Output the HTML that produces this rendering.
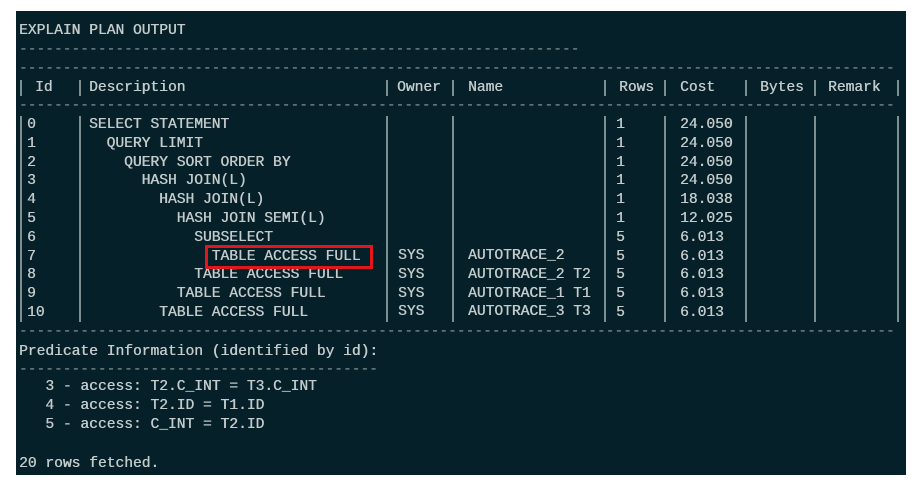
<!DOCTYPE html>
<html><head><meta charset="utf-8"><style>
html,body{margin:0;padding:0;background:#fff;width:922px;height:492px;overflow:hidden}
#p{position:absolute;left:16px;top:11px;width:890px;height:464px;background:#062029}
.t{position:absolute;font-family:"Liberation Mono",monospace;font-size:14.6px;line-height:18px;color:#c3cbcb;white-space:pre;letter-spacing:0;text-shadow:0.4px 0 0 #c3cbcb}
.d{color:#8a9a9a;text-shadow:none}
.v{position:absolute;width:2px;background:#7f8f8f;top:116px;height:206px}
.h{position:absolute;width:2px;background:#7f8f8f;top:80px;height:16px}
#box{position:absolute;left:205px;top:245px;width:162px;height:18px;border:3px solid #e3161b}
.r{line-height:18.8px}
</style></head><body>
<div id="p"></div>
<div class="t" style="left:19px;top:22px">EXPLAIN PLAN OUTPUT</div>
<div class="t d" style="left:19px;top:41px">----------------------------------------------------------------</div>
<div class="t d" style="left:19px;top:60px">----------------------------------------------------------------------------------------------------</div>
<div class="t d" style="left:19px;top:97px">----------------------------------------------------------------------------------------------------</div>
<div class="t d" style="left:19px;top:323px">----------------------------------------------------------------------------------------------------</div>

<div class="h" style="left:20px"></div><div class="h" style="left:79px"></div><div class="h" style="left:386px"></div><div class="h" style="left:452px"></div><div class="h" style="left:604px"></div><div class="h" style="left:664px"></div><div class="h" style="left:745px"></div><div class="h" style="left:814px"></div><div class="h" style="left:897px"></div>
<div class="v" style="left:20px"></div><div class="v" style="left:79px"></div><div class="v" style="left:386px"></div><div class="v" style="left:452px"></div><div class="v" style="left:604px"></div><div class="v" style="left:664px"></div><div class="v" style="left:745px"></div><div class="v" style="left:814px"></div><div class="v" style="left:897px"></div>

<div class="t" style="left:35px;top:79px">Id</div>
<div class="t" style="left:89px;top:79px">Description</div>
<div class="t" style="left:397px;top:79px">Owner</div>
<div class="t" style="left:468px;top:79px">Name</div>
<div class="t" style="left:619px;top:79px">Rows</div>
<div class="t" style="left:680px;top:79px">Cost</div>
<div class="t" style="left:760px;top:79px">Bytes</div>
<div class="t" style="left:828px;top:79px">Remark</div>

<div class="t r" style="left:27px;top:116px">0
1
2
3
4
5
6
7
8
9
10</div>
<div class="t r" style="left:89px;top:116px">SELECT STATEMENT
  QUERY LIMIT
    QUERY SORT ORDER BY
      HASH JOIN(L)
        HASH JOIN(L)
          HASH JOIN SEMI(L)
            SUBSELECT
              TABLE ACCESS FULL
            TABLE ACCESS FULL
          TABLE ACCESS FULL
        TABLE ACCESS FULL</div>
<div class="t r" style="left:398px;top:247px">SYS
SYS
SYS
SYS</div>
<div class="t r" style="left:468px;top:247px">AUTOTRACE_2
AUTOTRACE_2 T2
AUTOTRACE_1 T1
AUTOTRACE_3 T3</div>
<div class="t r" style="left:616px;top:116px">1
1
1
1
1
1
5
5
5
5
5</div>
<div class="t r" style="left:680px;top:116px">24.050
24.050
24.050
24.050
18.038
12.025
6.013
6.013
6.013
6.013
6.013</div>
<div id="box"></div>

<div class="t" style="left:19px;top:343px">Predicate Information (identified by id):</div>
<div class="t d" style="left:19px;top:361px">-----------------------------------------</div>
<div class="t" style="left:19px;top:378px;line-height:19px">   3 - access: T2.C_INT = T3.C_INT
   4 - access: T2.ID = T1.ID
   5 - access: C_INT = T2.ID</div>
<div class="t" style="left:19px;top:455px">20 rows fetched.</div>
</body></html>
